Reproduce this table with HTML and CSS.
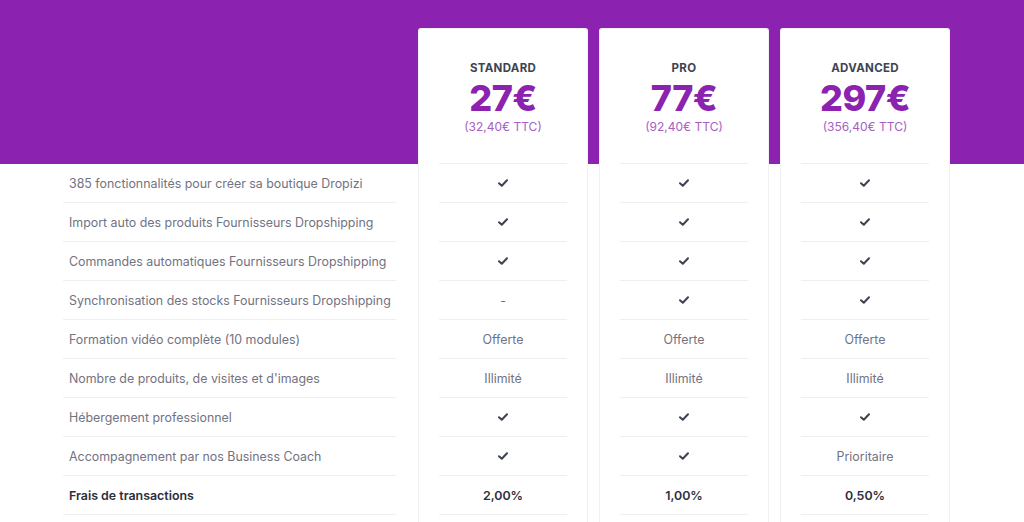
FILE: index.html
```html
<!DOCTYPE html>
<html lang="fr">
<head>
<meta charset="utf-8">
<title>Tarifs</title>
<link rel="stylesheet" href="styles.css">
</head>
<body>
<svg width="0" height="0" class="defs">
  <defs>
    <symbol id="chk" viewBox="0 0 10 8">
      <path d="M1 4.2 L3.8 6.8 L9 1.2" fill="none" stroke="#3d4451" stroke-width="2" stroke-linecap="round" stroke-linejoin="round"/>
    </symbol>
  </defs>
</svg>
<main class="pricing">
  <div class="features">
    <div class="head-spacer"></div>
    <div class="row feat">385 fonctionnalités pour créer sa boutique Dropizi</div>
    <div class="row feat">Import auto des produits Fournisseurs Dropshipping</div>
    <div class="row feat">Commandes automatiques Fournisseurs Dropshipping</div>
    <div class="row feat">Synchronisation des stocks Fournisseurs Dropshipping</div>
    <div class="row feat">Formation vidéo complète (10 modules)</div>
    <div class="row feat">Nombre de produits, de visites et d'images</div>
    <div class="row feat">Hébergement professionnel</div>
    <div class="row feat">Accompagnement par nos Business Coach</div>
    <div class="row feat strong">Frais de transactions</div>
  </div>

  <div class="card">
    <div class="card-head">
      <div class="plan">STANDARD</div>
      <div class="price">27€</div>
      <div class="ttc">(32,40€ TTC)</div>
    </div>
    <div class="row cell"><svg class="check"><use href="#chk"/></svg></div>
    <div class="row cell"><svg class="check"><use href="#chk"/></svg></div>
    <div class="row cell"><svg class="check"><use href="#chk"/></svg></div>
    <div class="row cell">-</div>
    <div class="row cell">Offerte</div>
    <div class="row cell">Illimité</div>
    <div class="row cell"><svg class="check"><use href="#chk"/></svg></div>
    <div class="row cell"><svg class="check"><use href="#chk"/></svg></div>
    <div class="row cell strong">2,00%</div>
  </div>

  <div class="card">
    <div class="card-head">
      <div class="plan">PRO</div>
      <div class="price">77€</div>
      <div class="ttc">(92,40€ TTC)</div>
    </div>
    <div class="row cell"><svg class="check"><use href="#chk"/></svg></div>
    <div class="row cell"><svg class="check"><use href="#chk"/></svg></div>
    <div class="row cell"><svg class="check"><use href="#chk"/></svg></div>
    <div class="row cell"><svg class="check"><use href="#chk"/></svg></div>
    <div class="row cell">Offerte</div>
    <div class="row cell">Illimité</div>
    <div class="row cell"><svg class="check"><use href="#chk"/></svg></div>
    <div class="row cell"><svg class="check"><use href="#chk"/></svg></div>
    <div class="row cell strong">1,00%</div>
  </div>

  <div class="card">
    <div class="card-head">
      <div class="plan">ADVANCED</div>
      <div class="price">297€</div>
      <div class="ttc">(356,40€ TTC)</div>
    </div>
    <div class="row cell"><svg class="check"><use href="#chk"/></svg></div>
    <div class="row cell"><svg class="check"><use href="#chk"/></svg></div>
    <div class="row cell"><svg class="check"><use href="#chk"/></svg></div>
    <div class="row cell"><svg class="check"><use href="#chk"/></svg></div>
    <div class="row cell">Offerte</div>
    <div class="row cell">Illimité</div>
    <div class="row cell"><svg class="check"><use href="#chk"/></svg></div>
    <div class="row cell">Prioritaire</div>
    <div class="row cell strong">0,50%</div>
  </div>
</main>
</body>
</html>
```

FILE: styles.css
```css
* { box-sizing: border-box; }

html, body {
  margin: 0;
  padding: 0;
}

body {
  font-family: "Inter", "Open Sans", sans-serif;
  background: linear-gradient(#8b23b0 0, #8b23b0 164px, #ffffff 164px);
  min-height: 522px;
  overflow: hidden;
}

.defs { position: absolute; }

.pricing {
  display: flex;
  align-items: flex-start;
  padding: 28px 0 0 63px;
}

.features {
  width: 333px;
  margin-right: 22px;
}

.head-spacer {
  height: 136px;
}

.row {
  height: 39px;
  border-bottom: 1px solid #efeff2;
  display: flex;
  align-items: center;
  white-space: nowrap;
}

.feat {
  padding-left: 6px;
  font-size: 12.4px;
  color: #727282;
}

.feat.strong {
  font-weight: 600;
  color: #2e2e38;
}

.card {
  width: 170px;
  margin-right: 11px;
  background: #fff;
  border: 1px solid #f1f1f4;
  border-bottom: none;
  border-radius: 3px 3px 0 0;
  padding: 0 20px 20px;
}

.card-head {
  height: 135px;
  border-bottom: 1px solid #efeff2;
  display: flex;
  flex-direction: column;
  align-items: center;
  padding-top: 32px;
}

.plan {
  font-size: 11.5px;
  font-weight: 700;
  color: #3d4451;
  letter-spacing: 0.3px;
  line-height: 14px;
}

.price {
  font-size: 36px;
  font-weight: 800;
  color: #8b23b0;
  line-height: 38px;
  letter-spacing: -0.5px;
  margin-top: 4px;
}

.ttc {
  font-size: 12px;
  color: #a75dc4;
  line-height: 16px;
  margin-top: 2px;
}

.cell {
  justify-content: center;
  font-size: 12.4px;
  color: #727282;
}

.cell.strong {
  font-weight: 600;
  color: #2e2e38;
}

.check {
  width: 10px;
  height: 8px;
}
```
